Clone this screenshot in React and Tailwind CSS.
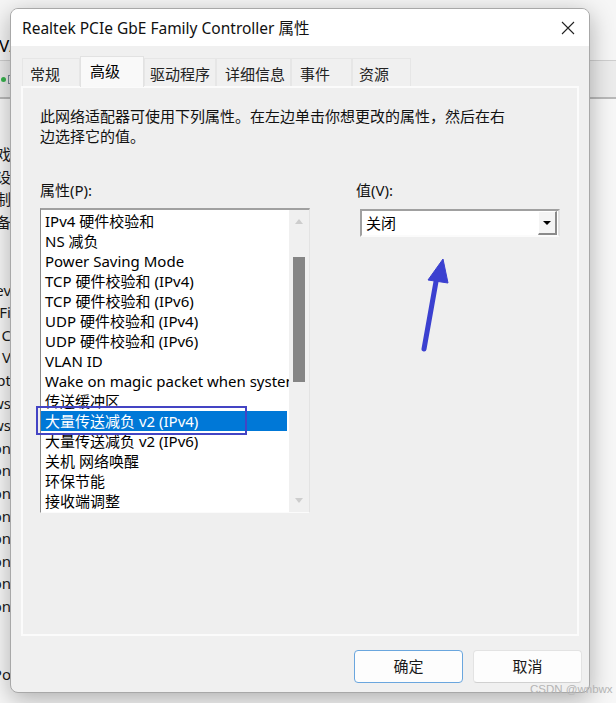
import React from "react";

const items = [
  "IPv4 硬件校验和",
  "NS 减负",
  "Power Saving Mode",
  "TCP 硬件校验和 (IPv4)",
  "TCP 硬件校验和 (IPv6)",
  "UDP 硬件校验和 (IPv4)",
  "UDP 硬件校验和 (IPv6)",
  "VLAN ID",
  "Wake on magic packet when system is in the S0ix power state",
  "传送缓冲区",
  "大量传送减负 v2 (IPv4)",
  "大量传送减负 v2 (IPv6)",
  "关机 网络唤醒",
  "环保节能",
  "接收端调整",
];

const bgRows = [
  "游戏", "设", "制", "备", "", "",
  "Dev", "Wi-Fi", "e C", " V", "pt", "ws", "ws",
  "on", "on", "on", "on", "on", "on", "on", "on",
  "", "", "Po",
];

const tabs = [
  { label: "常规", w: "w-[58px]", pl: "pl-[7px]" },
  { label: "高级", w: "w-[64px]", pl: "pl-[9px]", active: true },
  { label: "驱动程序", w: "w-[72px]", pl: "pl-[5px]" },
  { label: "详细信息", w: "w-[75px]", pl: "pl-[8px]" },
  { label: "事件", w: "w-[61px]", pl: "pl-[8px]" },
  { label: "资源", w: "w-[59px]", pl: "pl-[6px]" },
];

export default function App() {
  return (
    <div className="relative w-[616px] h-[703px] overflow-hidden bg-[#ececec] text-black font-['Noto_Sans','Noto_Sans_CJK_SC',sans-serif]">
      {/* backdrop window */}
      <div className="flex flex-col h-full">
        <div className="h-[61px] bg-[#f6f6f6] border-b border-[#cfcfcf] flex items-end pb-[4px]">
          <span className="text-[17px] leading-[20px] -ml-[1px]">V/</span>
        </div>
        <div className="h-[38px] bg-[#ececec] border-b-2 border-[#b9b9b9] flex items-center gap-[2px] pl-[1px]">
          <span className="w-[5px] h-[5px] rounded-full bg-[#37b24d]" />
          <span className="w-[6px] h-[9px] border border-[#7a8a9a]" />
        </div>
        <div className="flex-1 bg-[#f7f7f7] pt-[44px]">
          {bgRows.map((t, i) => (
            <div key={i} className="w-[11px] h-[22.6px] overflow-hidden flex justify-end text-[15px] leading-[22.6px] text-[#1a1a1a] whitespace-pre">
              <span>{t}</span>
            </div>
          ))}
        </div>
      </div>

      {/* dialog */}
      <div className="absolute left-[10px] top-[8px] w-[580px] h-[685px] rounded-[8px] bg-[#f0f0f0] border border-[#a8a8a8] shadow-[0_6px_24px_rgba(0,0,0,0.30)] overflow-hidden flex flex-col">
        <div className="h-[37px] bg-white flex items-center justify-between pl-[11px] pr-[14px]">
          <span className="text-[15.5px] leading-[20px] text-[#111]">Realtek PCIe GbE Family Controller 属性</span>
          <svg width="14" height="14" viewBox="0 0 14 14" className="mt-[1px]">
            <path d="M1 1 L13 13 M13 1 L1 13" stroke="#222" strokeWidth="1.1" fill="none" />
          </svg>
        </div>

        {/* tabs */}
        <div className="mt-[10px] h-[30px] flex items-end pl-[11px]">
          {tabs.map((t) =>
            t.active ? (
              <div key={t.label} className={`${t.w} ${t.pl} h-[31px] -mb-[1px] bg-[#f9f9f9] border border-b-0 border-[#e2e2e2] text-[15px] leading-[28px] relative z-10`}>
                {t.label}
              </div>
            ) : (
              <div key={t.label} className={`${t.w} ${t.pl} h-[28px] bg-[#f0f0f0] border border-b-0 border-[#e6e6e6] text-[15px] leading-[30px] text-[#222]`}>
                {t.label}
              </div>
            )
          )}
        </div>

        {/* panel */}
        <div className="mx-[10px] h-[550px] border-2 border-[#fbfbfb] bg-[#efefef] px-[17px] pt-[18px]">
          <p className="text-[15px] leading-[20px] text-[#111]">
            此网络适配器可使用下列属性。在左边单击你想更改的属性，然后在右
            <br />
            边选择它的值。
          </p>
          <div className="flex mt-[34px]">
            <div className="w-[270px]">
              <div className="text-[15px] leading-[20px] text-[#111]">属性(P):</div>
              <div className="mt-[8px] h-[305px] border-t-2 border-l border-r border-b border-t-[#a0a0a0] border-l-[#8a8a8a] border-r-[#e3e3e3] border-b-[#fbfbfb] flex">
                <div className="flex-1 bg-white pt-[1px] overflow-hidden">
                  {items.map((it, i) => (
                    <div
                      key={i}
                      className={`h-[20px] leading-[20px] text-[15px] pl-[4px] whitespace-nowrap overflow-hidden ${i === 10 ? "bg-[#0078d7] text-white mr-[2px]" : "text-black"}`}
                    >
                      {it}
                    </div>
                  ))}
                </div>
                <div className="w-[20px] bg-[#f0f0f0] flex flex-col items-center pt-[9px] pb-[9px]">
                  <div className="w-0 h-0 border-x-[4px] border-x-transparent border-b-[5px] border-b-[#cdcdcd]" />
                  <div className="mt-[33px] w-[12px] h-[125px] bg-[#858585]" />
                  <div className="flex-1" />
                  <div className="w-0 h-0 border-x-[4px] border-x-transparent border-t-[5px] border-t-[#cdcdcd]" />
                </div>
              </div>
            </div>
            <div className="ml-[46px]">
              <div className="text-[15px] leading-[20px] text-[#111]">值(V):</div>
              <div className="mt-[9px] ml-[4px] w-[200px] h-[28px] bg-white border-2 border-t-[#a0a0a0] border-l-[#a0a0a0] border-r-[#e3e3e3] border-b-[#fbfbfb] flex items-center justify-between">
                <span className="pl-[4px] text-[15px] leading-[20px] text-black">关闭</span>
                <div className="h-full w-[19px] mr-[1px] bg-[#f4f4f4] border-t border-l border-t-[#ffffff] border-l-[#ffffff] border-r-2 border-b-2 border-r-[#8a8a8a] border-b-[#8a8a8a] flex items-center justify-center">
                  <div className="w-0 h-0 border-x-[4px] border-x-transparent border-t-[4px] border-t-black" />
                </div>
              </div>
            </div>
          </div>
        </div>

        {/* buttons */}
        <div className="mt-[14px] flex justify-end gap-[10px] pr-[7px]">
          <button className="w-[109px] h-[33px] rounded-[4px] bg-[#fdfdfd] border border-[#6aa6de] text-[15px] text-[#1a1a1a]">确定</button>
          <button className="w-[109px] h-[33px] rounded-[4px] bg-[#fdfdfd] border border-[#e3e3e3] border-b-[#d0d0d0] text-[15px] text-[#1a1a1a]">取消</button>
        </div>
      </div>

      {/* annotation: rectangle */}
      <div className="absolute left-[36px] top-[406px] w-[211px] h-[29px] border-2 border-[#4444c4]" />
      {/* annotation: arrow */}
      <svg className="absolute left-[415px] top-[250px]" width="45" height="110" viewBox="0 0 45 110">
        <path d="M9 99 L22 26" stroke="#3b40d0" strokeWidth="5" strokeLinecap="round" fill="none" />
        <path d="M28 9 L13 30 L33 33 Z" fill="#3b40d0" stroke="#3b40d0" strokeWidth="1" strokeLinejoin="round" />
      </svg>

      {/* watermark */}
      <div className="absolute left-[530px] top-[682px] whitespace-nowrap text-[11.5px] leading-[14px] text-[#b4b4b4] font-['Liberation_Sans',sans-serif]">
        CSDN @wnbwx
      </div>
    </div>
  );
}
